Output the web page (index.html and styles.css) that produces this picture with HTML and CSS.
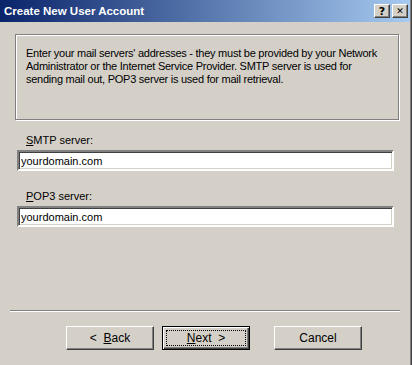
FILE: index.html
```html
<!DOCTYPE html>
<html lang="en">
<head>
  <meta charset="UTF-8">
  <title>Create New User Account</title>
  <link rel="stylesheet" href="styles.css">
</head>
<body>
  <div class="window">
    <div class="title-bar">
      <span class="title">Create New User Account</span>
      <div class="title-buttons">
        <button class="cap-btn">?</button>
        <button class="cap-btn cap-close">&#10005;</button>
      </div>
    </div>

    <div class="client">
      <div class="info-box">
        <p>Enter your mail servers' addresses - they must be provided by your Network<br>
        Administrator or the Internet Service Provider. SMTP server is used for<br>
        sending mail out, POP3 server is used for mail retrieval.</p>
      </div>

      <div class="fields">
        <div class="field">
          <label for="smtp"><u>S</u>MTP server:</label>
          <input type="text" id="smtp" value="yourdomain.com">
        </div>

        <div class="field">
          <label for="pop3"><u>P</u>OP3 server:</label>
          <input type="text" id="pop3" value="yourdomain.com">
        </div>
      </div>

      <div class="separator"></div>

      <div class="buttons">
        <button class="btn">&lt;&nbsp;&nbsp;<u>B</u>ack</button>
        <button class="btn btn-default"><span class="focus"><u>N</u>ext&nbsp;&nbsp;&gt;</span></button>
        <button class="btn btn-cancel">Cancel</button>
      </div>
    </div>
  </div>
</body>
</html>
```

FILE: styles.css
```css
body {
  margin: 0;
  background: #d4d0c8;
  font-family: "Liberation Sans", Arial, sans-serif;
  font-size: 11px;
  color: #000;
}

.window {
  width: 410px;
  height: 365px;
  border-right: 1px solid #808080;
  box-shadow: 1px 0 0 #404040;
  display: flex;
  flex-direction: column;
}

/* заголовок окна */
.title-bar {
  height: 22px;
  background: linear-gradient(to right, #0a246a, #a6caf0);
  display: flex;
  align-items: center;
  justify-content: space-between;
  padding: 0 2px 0 4px;
}

.title {
  color: #fff;
  font-weight: bold;
  font-size: 11.5px;
}

.title-buttons {
  display: flex;
  gap: 2px;
}

.cap-btn {
  width: 16px;
  height: 14px;
  padding: 0;
  background: #d4d0c8;
  border: 1px solid;
  border-color: #fff #404040 #404040 #fff;
  box-shadow: inset -1px -1px #808080;
  font-family: "DejaVu Sans", sans-serif;
  font-weight: bold;
  font-size: 11px;
  line-height: 11px;
  color: #000;
}

.cap-close {
  font-size: 9px;
}

.client {
  flex: 1;
  display: flex;
  flex-direction: column;
  padding: 12px 10px 0 17px;
}

.info-box {
  margin-left: -2px;
  width: 384px;
  height: 86px;
  border: 1px solid #808080;
  box-shadow: inset 1px 1px #fff, 1px 1px #fff;
  padding: 12px 0 0 10px;
  box-sizing: border-box;
}

.info-box p {
  margin: 0;
  line-height: 13px;
  white-space: nowrap;
  letter-spacing: -0.25px;
}

/* поля ввода серверов */
.fields {
  display: flex;
  flex-direction: column;
  gap: 19px;
  margin-top: 14px;
}

.field {
  display: flex;
  flex-direction: column;
}

.field label {
  padding-left: 9px;
  height: 16px;
  line-height: 13px;
}

.field input {
  width: 377px;
  height: 21px;
  box-sizing: border-box;
  margin: 0;
  padding: 0 2px;
  border: 2px solid;
  border-color: #808080 #fff #fff #808080;
  box-shadow: inset 1px 1px #404040, inset -1px -1px #d4d0c8;
  background: #fff;
  font-family: "Liberation Sans", Arial, sans-serif;
  font-size: 11px;
  outline: none;
}

.separator {
  margin-top: auto;
  margin-left: -7px;
  width: 390px;
  height: 1px;
  background: #808080;
  border-bottom: 1px solid #fff;
}

.buttons {
  display: flex;
  padding: 14px 0 15px 49px;
  gap: 8px;
}

.btn {
  width: 88px;
  height: 24px;
  padding: 0;
  background: #d4d0c8;
  border: 1px solid;
  border-color: #fff #404040 #404040 #fff;
  box-shadow: inset -1px -1px #808080;
  font-family: "Liberation Sans", Arial, sans-serif;
  font-size: 12px;
  color: #000;
}

.btn-default {
  border: 1px solid #000;
  box-shadow: inset 1px 1px #fff, inset -1px -1px #404040, inset -2px -2px #808080;
  padding: 3px;
}

.btn-default .focus {
  display: flex;
  align-items: center;
  justify-content: center;
  height: 100%;
  border: 1px dotted #000;
  box-sizing: border-box;
}

.btn-cancel {
  margin-left: 16px;
}
```
